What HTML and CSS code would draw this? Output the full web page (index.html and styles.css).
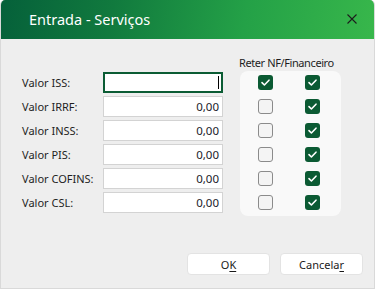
FILE: index.html
```html
<!DOCTYPE html>
<html lang="pt">
<head>
<meta charset="utf-8">
<title>Entrada - Serviços</title>
<link rel="stylesheet" href="styles.css">
</head>
<body>
<div class="window">
  <header class="titlebar">
    <span class="title">Entrada - Serviços</span>
    <svg class="close" width="10" height="10" viewBox="0 0 10 10"><path d="M0.5 0.5L9.5 9.5M9.5 0.5L0.5 9.5" stroke="#1c1c1c" stroke-width="1.1" fill="none"/></svg>
  </header>
  <main class="content">
    <div class="fields">
      <label class="label">Valor ISS:</label><div class="input focused"><span class="caret"></span></div>
      <label class="label">Valor IRRF:</label><div class="input">0,00</div>
      <label class="label">Valor INSS:</label><div class="input">0,00</div>
      <label class="label">Valor PIS:</label><div class="input">0,00</div>
      <label class="label">Valor COFINS:</label><div class="input">0,00</div>
      <label class="label">Valor CSL:</label><div class="input">0,00</div>
    </div>
    <div class="retain">
      <div class="retain-title">Reter NF/Financeiro</div>
      <div class="panel">
        <span class="cb checked"><svg viewBox="0 0 15 15"><path d="M4 7.6L6.4 10L11 5.2" /></svg></span>
        <span class="cb checked"><svg viewBox="0 0 15 15"><path d="M4 7.6L6.4 10L11 5.2" /></svg></span>
        <span class="cb"></span>
        <span class="cb checked"><svg viewBox="0 0 15 15"><path d="M4 7.6L6.4 10L11 5.2" /></svg></span>
        <span class="cb"></span>
        <span class="cb checked"><svg viewBox="0 0 15 15"><path d="M4 7.6L6.4 10L11 5.2" /></svg></span>
        <span class="cb"></span>
        <span class="cb checked"><svg viewBox="0 0 15 15"><path d="M4 7.6L6.4 10L11 5.2" /></svg></span>
        <span class="cb"></span>
        <span class="cb checked"><svg viewBox="0 0 15 15"><path d="M4 7.6L6.4 10L11 5.2" /></svg></span>
        <span class="cb"></span>
        <span class="cb checked"><svg viewBox="0 0 15 15"><path d="M4 7.6L6.4 10L11 5.2" /></svg></span>
      </div>
    </div>
  </main>
  <footer class="actions">
    <button class="btn">O<u>K</u></button>
    <button class="btn">Cancela<u>r</u></button>
  </footer>
</div>
</body>
</html>
```
FILE: styles.css
```css
* { box-sizing: border-box; }
html, body { margin: 0; padding: 0; background: #ffffff; }
body { font-family: "Noto Sans", "Liberation Sans", sans-serif; color: #1a1a1a; }

.window {
  width: 375px;
  height: 289px;
  display: flex;
  flex-direction: column;
  background: #eeeeee;
  border: 1px solid #d9d9d9;
  border-top: none;
  border-radius: 5px 5px 0 0;
  overflow: hidden;
}

.titlebar {
  height: 39px;
  flex: none;
  display: flex;
  align-items: center;
  justify-content: space-between;
  padding: 0 18px 0 29px;
  background: linear-gradient(100deg, #05603a 0%, #117a3e 30%, #24a147 65%, #38b74b 100%);
  margin: 0 -1px;
}
.title {
  color: #ffffff;
  font-size: 14.5px;
  margin-top: -1px;
}
.close { display: block; margin-top: -1px; }

.content {
  display: flex;
  align-items: flex-start;
  padding-left: 21px;
}

.fields {
  margin-top: 33px;
  display: grid;
  grid-template-columns: 81px 120px;
  grid-auto-rows: 21px;
  row-gap: 3px;
}
.label {
  font-size: 11px;
  line-height: 21px;
  color: #1e1e1e;
}
.input {
  background: #ffffff;
  border: 1px solid #d3d3d3;
  font-size: 11.5px;
  line-height: 19px;
  padding-right: 3px;
  color: #1b1b2b;
  display: flex;
  align-items: center;
  justify-content: flex-end;
}
.input.focused {
  border: 2px solid #0b5c34;
  padding-right: 2px;
}
.caret {
  width: 1px;
  height: 13px;
  background: #000;
}

.retain {
  margin-left: 17px;
  margin-top: 16px;
  display: flex;
  flex-direction: column;
}
.retain-title {
  font-size: 11px;
  line-height: 16px;
  letter-spacing: -0.4px;
  color: #1e1e1e;
  margin-left: -1px;
}
.panel {
  width: 101px;
  height: 145px;
  background: #f9f9f9;
  border-radius: 8px;
  display: grid;
  grid-template-columns: 15px 15px;
  grid-auto-rows: 15px;
  column-gap: 32px;
  row-gap: 9px;
  padding: 4px 0 0 18px;
}
.cb {
  width: 15px;
  height: 15px;
  border-radius: 3px;
  border: 1px solid #8b8b8b;
  background: #f4f4f4;
  display: block;
}
.cb.checked {
  border: none;
  background: #0b5a33;
}
.cb svg { width: 15px; height: 15px; display: block; }
.cb svg path { fill: none; stroke: #ffffff; stroke-width: 1.6; stroke-linecap: round; stroke-linejoin: round; }

.actions {
  margin-top: auto;
  display: flex;
  justify-content: flex-end;
  gap: 10px;
  padding: 0 11px 13px 0;
}
.btn {
  width: 83px;
  height: 22px;
  background: #ffffff;
  border: 1px solid #e3e3e3;
  border-radius: 4px;
  font-family: "Noto Sans", "Liberation Sans", sans-serif;
  font-size: 11px;
  color: #1a1a1a;
  padding: 0;
}
.btn u { text-underline-offset: 2px; }
```
